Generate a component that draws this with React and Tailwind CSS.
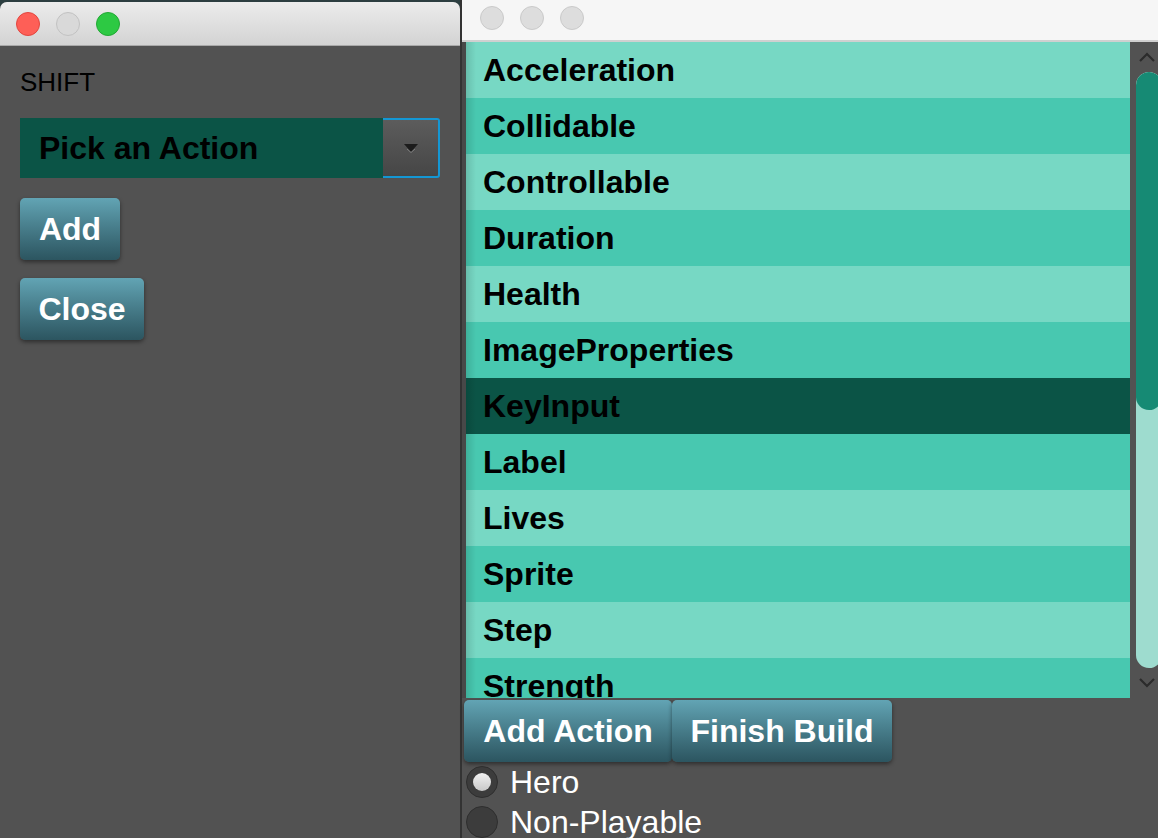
import React from 'react'

const items = [
  'Acceleration', 'Collidable', 'Controllable', 'Duration', 'Health', 'ImageProperties',
  'KeyInput', 'Label', 'Lives', 'Sprite', 'Step', 'Strength',
]

function Light({ color }) {
  return <div className={`w-[24px] h-[24px] rounded-full border ${color}`} />
}

function FxButton({ children, className = '' }) {
  return (
    <button
      className={`h-[62px] px-[18px] rounded-[5px] bg-gradient-to-b from-[#62a4b4] to-[#2c5560] text-white font-bold text-[32px] shadow-[0_2px_4px_rgba(0,0,0,0.45)] ${className}`}
    >
      {children}
    </button>
  )
}

function Row({ label, idx }) {
  let bg = idx % 2 === 0 ? 'bg-[#77d8c4]' : 'bg-[#48c8b0]'
  if (label === 'KeyInput') bg = 'bg-[#0b5446]'
  return (
    <div className={`h-[56px] shrink-0 flex items-center pl-[17px] text-[32px] font-bold text-black ${bg}`}>
      {label}
    </div>
  )
}

export default function App() {
  return (
    <div
      className="w-[1158px] h-[838px] overflow-hidden flex bg-[#2c3e40]"
      style={{ fontFamily: '"Liberation Sans", Arial, sans-serif' }}
    >
      {/* left window */}
      <div className="w-[460px] shrink-0 mt-[2px] flex flex-col rounded-t-[7px] overflow-hidden bg-[#525252]">
        <div className="h-[44px] shrink-0 flex items-center gap-[16px] pl-[16px] bg-gradient-to-b from-[#ececec] to-[#d3d3d3] border-b border-[#a9a9a9]">
          <Light color="bg-[#fe5f57] border-[#e2463f]" />
          <Light color="bg-[#d9d9d9] border-[#c2c2c2]" />
          <Light color="bg-[#2dc943] border-[#22a834]" />
        </div>
        <div className="flex flex-col items-start px-[20px] pt-[22px]">
          <div className="text-[26px] text-black leading-[28px]">SHIFT</div>
          <div className="mt-[22px] w-[420px] h-[60px] flex rounded-[3px] border-2 border-[#1497d4]">
            <div className="flex-1 -m-[2px] mr-0 bg-[#0b5446] flex items-center pl-[19px] text-[32px] font-bold text-black">
              Pick an Action
            </div>
            <div className="w-[55px] flex items-center justify-center bg-gradient-to-b from-[#5c5c5c] to-[#464646] rounded-r-[2px]">
              <svg width="16" height="10" viewBox="0 0 16 10">
                <path d="M1 1 L15 1 L8 9 Z" fill="#1c1c1c" />
                <path d="M4 6 L8 9.5 L12 6" stroke="#8a8a8a" strokeWidth="0.8" fill="none" />
              </svg>
            </div>
          </div>
          <FxButton className="mt-[20px] w-[100px]">Add</FxButton>
          <FxButton className="mt-[18px] w-[124px]">Close</FxButton>
        </div>
      </div>

      <div className="w-[2px] shrink-0 bg-[#333333]" />

      {/* right window */}
      <div className="w-[702px] shrink-0 flex flex-col bg-[#525252]">
        <div className="h-[42px] shrink-0 flex items-center gap-[16px] pl-[18px] pb-[4px] bg-[#f6f6f6] border-b-2 border-[#d0d0d0]">
          <Light color="bg-[#dddddd] border-[#cacaca]" />
          <Light color="bg-[#dddddd] border-[#cacaca]" />
          <Light color="bg-[#dddddd] border-[#cacaca]" />
        </div>
        <div className="h-[656px] shrink-0 flex pl-[4px] bg-[#484848]">
          <div className="w-[664px] flex flex-col overflow-hidden relative">
            {items.map((it, i) => (
              <Row key={it} label={it} idx={i} />
            ))}
            <div className="absolute inset-y-0 left-0 w-[10px] bg-gradient-to-r from-[rgba(0,0,0,0.12)] to-transparent pointer-events-none" />
          </div>
          <div className="flex-1 bg-[#525252] flex flex-col items-start">
            <div className="h-[30px] w-[34px] flex items-center justify-center">
              <svg width="16" height="10" viewBox="0 0 16 10">
                <path d="M1 9 L8 2 L15 9" stroke="#2b2b2b" strokeWidth="2.2" fill="none" />
              </svg>
            </div>
            <div className="ml-[6px] w-[26px] h-[596px] rounded-[13px] bg-[#9edccf] overflow-hidden">
              <div className="h-[338px] rounded-[13px] bg-[#168a74]" />
            </div>
            <div className="h-[30px] w-[34px] flex items-center justify-center">
              <svg width="16" height="10" viewBox="0 0 16 10">
                <path d="M1 1 L8 8 L15 1" stroke="#2b2b2b" strokeWidth="2.2" fill="none" />
              </svg>
            </div>
          </div>
        </div>
        <div className="flex pl-[2px] pt-[2px]">
          <FxButton className="w-[208px]">Add Action</FxButton>
          <FxButton className="w-[220px]">Finish Build</FxButton>
        </div>
        <div className="flex flex-col pl-[4px]">
          <div className="h-[40px] flex items-center gap-[12px]">
            <div className="w-[32px] h-[32px] rounded-full bg-[#3c3c3c] border border-[#2e2e2e] flex items-center justify-center">
              <div className="w-[18px] h-[18px] rounded-full bg-gradient-to-b from-[#f2f2f2] to-[#c8c8c8]" />
            </div>
            <span className="text-[32px] text-white">Hero</span>
          </div>
          <div className="h-[40px] flex items-center gap-[12px]">
            <div className="w-[32px] h-[32px] rounded-full bg-[#3c3c3c] border border-[#2e2e2e]" />
            <span className="text-[32px] text-white">Non-Playable</span>
          </div>
        </div>
      </div>
    </div>
  )
}
